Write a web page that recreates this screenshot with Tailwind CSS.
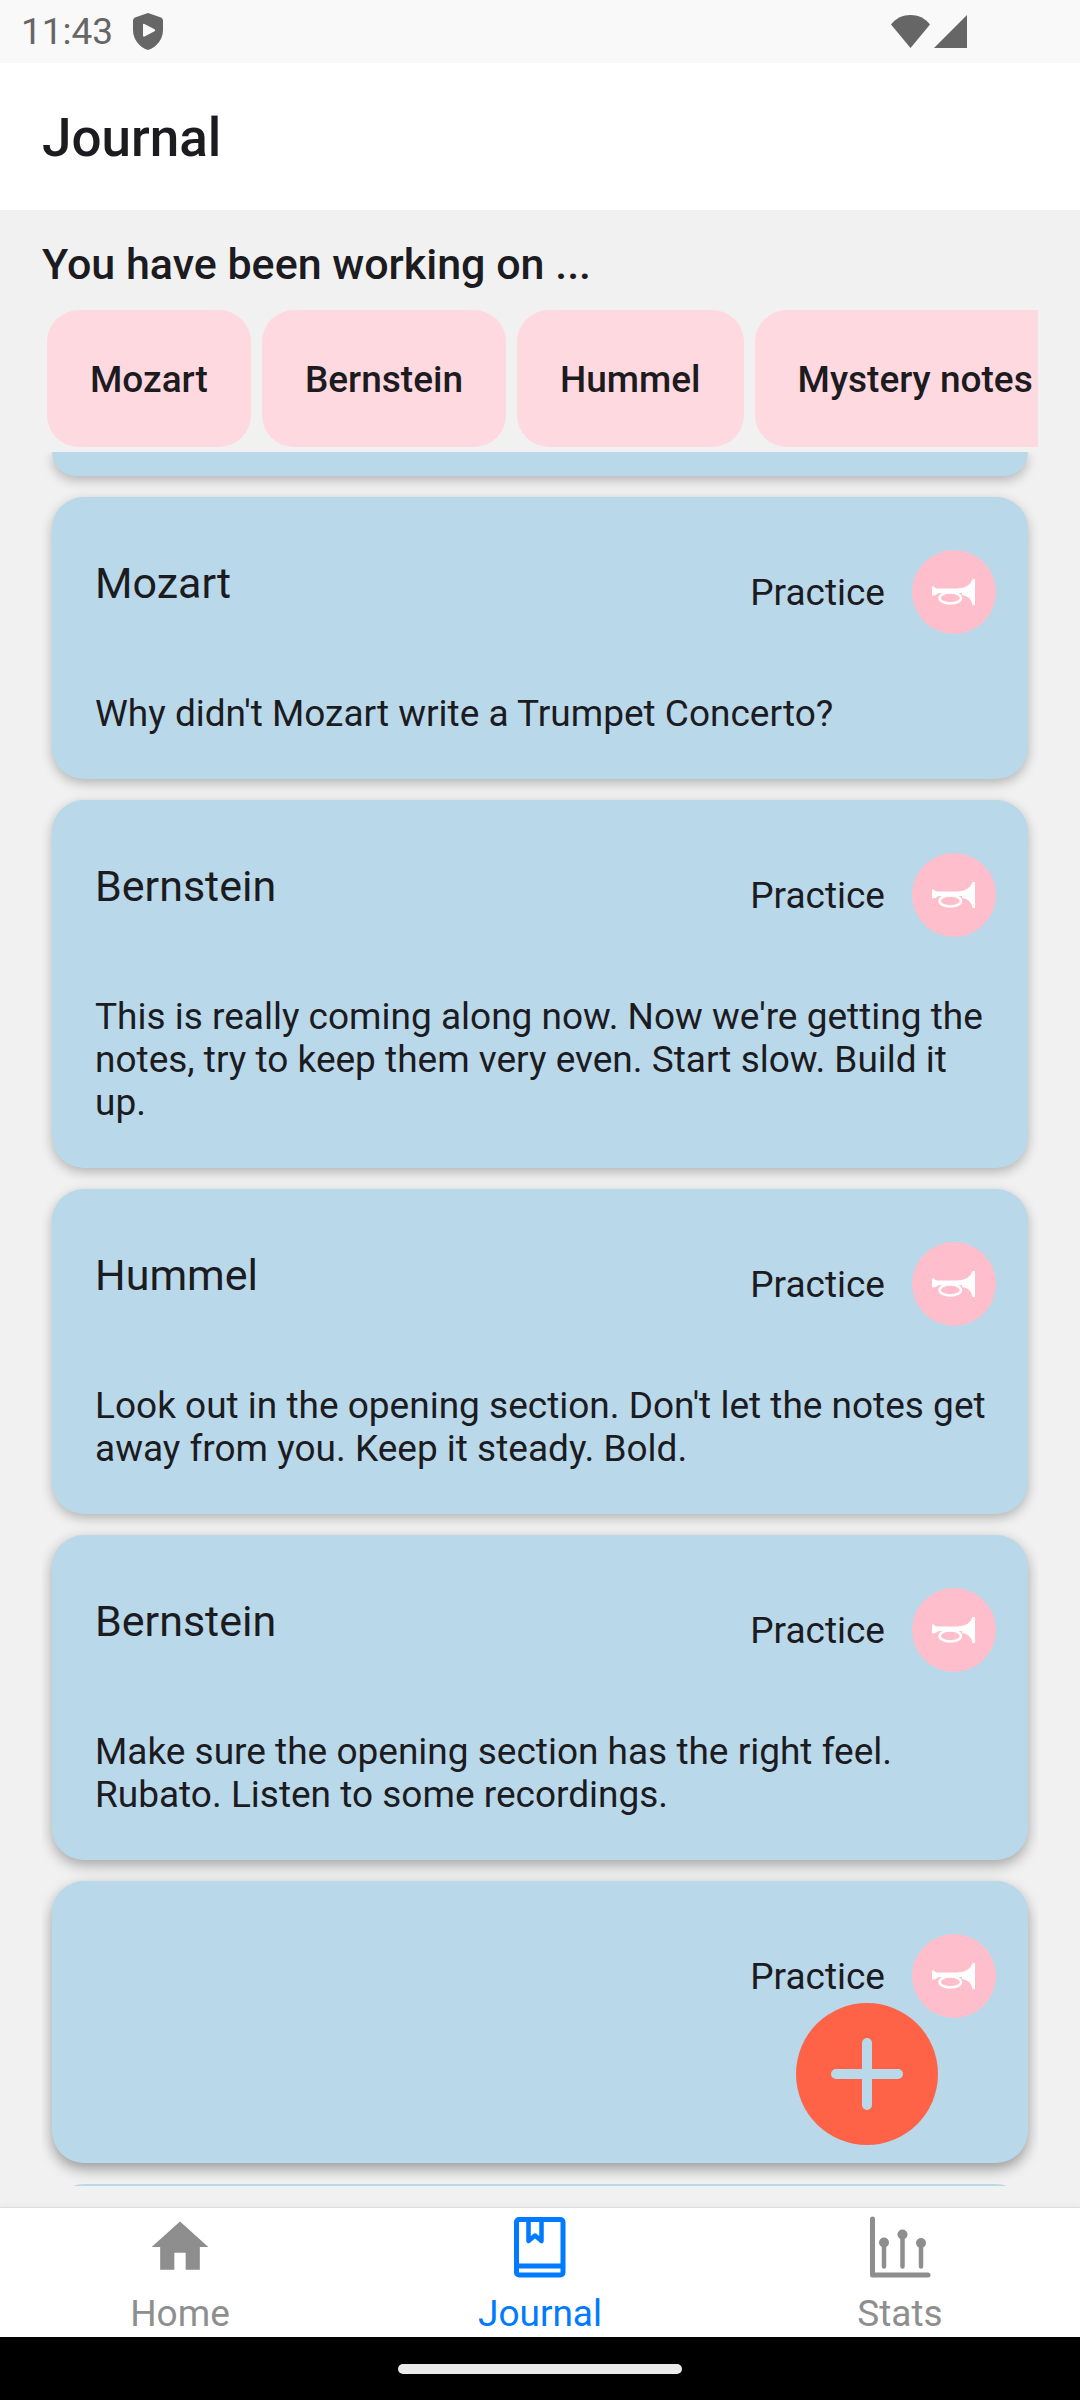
<!DOCTYPE html>
<html lang="en">
<head>
<meta charset="utf-8">
<meta name="viewport" content="width=device-width, initial-scale=1">
<title>Journal</title>
<script src="https://cdn.jsdelivr.net/npm/@tailwindcss/browser@4"></script>
</head>
<body class="font-[Roboto,sans-serif] text-[#1c1b1f]">
<svg class="hidden">
  <symbol id="trumpet" viewBox="0 0 44 28">
    <path d="M0 8.500h2Q3 10.500 5 10.500H25Q38 10 40.500 1H43V27H40.500Q39 18 30 17V15H8Q5 15 4 17L0 17.500z" fill="#fff"/>
    <ellipse cx="18.300" cy="20" rx="10.700" ry="5.500" fill="#ffbecb" stroke="#fff" stroke-width="2.500"/>
  </symbol>
</svg>
<div class="relative flex h-screen flex-col overflow-hidden bg-[#f1f1f1]">

  <!-- Status bar -->
  <div class="flex h-[63px] shrink-0 items-center justify-between bg-[#f9f9f9] pl-[21px] pr-[113px] text-[#666]">
    <div class="flex items-center gap-5">
      <span class="text-[37px] leading-[43px]">11:43</span>
      <svg class="h-[37px] w-[30px]" viewBox="0 0 30 37"><path fill="#666" fill-rule="evenodd" d="M15 0 2 4.500Q0 5.300 0 7.500V17C0 26 6 34 15 37c9-3 15-11 15-20V7.500Q30 5.300 28 4.500zM11.500 11c-1-.6-1.500-.2-1.500.8v10.800c0 1 .6 1.300 1.500.8l10-5.200c1-.6 1-1.300 0-1.900z"/></svg>
    </div>
    <div class="flex items-center gap-1">
      <svg class="h-[33px] w-[39px]" viewBox="0 0 39 33"><path fill="#666" d="M19.500 33 0 9.500C5 3 12 0 19.500 0S34 3 39 9.500z"/></svg>
      <svg class="h-[33px] w-[33px]" viewBox="0 0 33 33"><path fill="#666" d="M33 0v33H0z"/></svg>
    </div>
  </div>

  <!-- Title bar -->
  <header class="flex h-[147px] shrink-0 items-center bg-white px-[42px] pt-1">
    <h1 class="text-[53px] font-medium leading-[61px]">Journal</h1>
  </header>

  <main class="flex min-h-0 flex-1 flex-col px-[42px] pt-[30px]">
    <h2 class="text-[43px] font-medium leading-[49px]">You have been working on ...</h2>
    <div class="mt-[21px] flex shrink-0 gap-[11px] overflow-hidden pl-[5px]">
      <button class="h-[137px] shrink-0 rounded-[32px] bg-[#ffd9e0] px-[43px] pt-0.5 text-[37px] font-medium leading-[43px]">Mozart</button>
      <button class="h-[137px] shrink-0 rounded-[32px] bg-[#ffd9e0] px-[43px] pt-0.5 text-[37px] font-medium leading-[43px]">Bernstein</button>
      <button class="h-[137px] shrink-0 rounded-[32px] bg-[#ffd9e0] px-[43px] pt-0.5 text-[37px] font-medium leading-[43px]">Hummel</button>
      <button class="h-[137px] shrink-0 rounded-[32px] bg-[#ffd9e0] px-[43px] pt-0.5 text-[37px] font-medium leading-[43px]">Mystery notes</button>
    </div>

    <!-- Entries -->
    <div class="mb-[21px] mt-[5px] flex min-h-0 flex-1 flex-col gap-[21px] overflow-hidden px-2.5">
      <div class="h-6 shrink-0 rounded-b-[32px] bg-[#b9d8e9] shadow-[0_4px_12px_rgba(0,0,0,0.26)]"></div>

      <article class="shrink-0 rounded-[32px] bg-[#b9d8e9] shadow-[0_4px_12px_rgba(0,0,0,0.26)]">
        <div class="flex h-[189px] items-center pl-[43px] pr-8">
          <h3 class="flex-1 pb-4 text-[43px] leading-[49px]">Mozart</h3>
          <span class="mr-[27px] pt-0.5 text-[37px] leading-[43px]">Practice</span>
          <span class="flex size-[84px] items-center justify-center rounded-full bg-[#ffbecb]"><svg class="h-7 w-11"><use href="#trumpet"/></svg></span>
        </div>
        <p class="pb-11 pl-[43px] pr-8 pt-1.5 text-[37px] leading-[43px]">Why didn't Mozart write a Trumpet Concerto?</p>
      </article>

      <article class="shrink-0 rounded-[32px] bg-[#b9d8e9] shadow-[0_4px_12px_rgba(0,0,0,0.26)]">
        <div class="flex h-[189px] items-center pl-[43px] pr-8">
          <h3 class="flex-1 pb-4 text-[43px] leading-[49px]">Bernstein</h3>
          <span class="mr-[27px] pt-0.5 text-[37px] leading-[43px]">Practice</span>
          <span class="flex size-[84px] items-center justify-center rounded-full bg-[#ffbecb]"><svg class="h-7 w-11"><use href="#trumpet"/></svg></span>
        </div>
        <p class="pb-11 pl-[43px] pr-8 pt-1.5 text-[37px] leading-[43px]">This is really coming along now. Now we're getting the notes, try to keep them very even. Start slow. Build it up.</p>
      </article>

      <article class="shrink-0 rounded-[32px] bg-[#b9d8e9] shadow-[0_4px_12px_rgba(0,0,0,0.26)]">
        <div class="flex h-[189px] items-center pl-[43px] pr-8">
          <h3 class="flex-1 pb-4 text-[43px] leading-[49px]">Hummel</h3>
          <span class="mr-[27px] pt-0.5 text-[37px] leading-[43px]">Practice</span>
          <span class="flex size-[84px] items-center justify-center rounded-full bg-[#ffbecb]"><svg class="h-7 w-11"><use href="#trumpet"/></svg></span>
        </div>
        <p class="pb-11 pl-[43px] pr-8 pt-1.5 text-[37px] leading-[43px]">Look out in the opening section. Don't let the notes get away from you. Keep it steady. Bold.</p>
      </article>

      <article class="shrink-0 rounded-[32px] bg-[#b9d8e9] shadow-[0_5px_14px_rgba(0,0,0,0.32)]">
        <div class="flex h-[189px] items-center pl-[43px] pr-8">
          <h3 class="flex-1 pb-4 text-[43px] leading-[49px]">Bernstein</h3>
          <span class="mr-[27px] pt-0.5 text-[37px] leading-[43px]">Practice</span>
          <span class="flex size-[84px] items-center justify-center rounded-full bg-[#ffbecb]"><svg class="h-7 w-11"><use href="#trumpet"/></svg></span>
        </div>
        <p class="pb-11 pl-[43px] pr-8 pt-1.5 text-[37px] leading-[43px]">Make sure the opening section has the right feel. Rubato. Listen to some recordings.</p>
      </article>

      <article class="h-[282px] shrink-0 rounded-[32px] bg-[#b9d8e9] shadow-[0_6px_14px_rgba(0,0,0,0.36)]">
        <div class="flex h-[189px] items-center justify-end pl-[43px] pr-8">
          <span class="mr-[27px] pt-0.5 text-[37px] leading-[43px]">Practice</span>
          <span class="flex size-[84px] items-center justify-center rounded-full bg-[#ffbecb]"><svg class="h-7 w-11"><use href="#trumpet"/></svg></span>
        </div>
      </article>

      <div class="h-[282px] shrink-0 rounded-[32px] bg-[#b9d8e9]"></div>
    </div>
  </main>

  <!-- Floating add button -->
  <button aria-label="Add entry" class="absolute bottom-[255px] right-[142px] flex size-[142px] items-center justify-center rounded-full bg-[#ff6347]">
    <svg class="size-[72px]" viewBox="0 0 72 72"><path d="M36 5v62M5 36h62" stroke="#b9d8e9" stroke-width="10" stroke-linecap="round"/></svg>
  </button>

  <!-- Tab bar -->
  <nav class="grid h-[130px] shrink-0 grid-cols-3 border-t border-[#dedede] bg-white pt-[5px] text-[37px] leading-[43px] text-[#8e8e8f] shadow-[0_-2px_6px_rgba(0,0,0,0.04)]">
    <a href="#home" class="flex flex-col items-center gap-[11px]">
      <svg class="size-[68px]" viewBox="0 0 24 24"><path fill="currentColor" d="M10 20v-6h4v6h5v-8h3L12 3 2 12h3v8z"/></svg>
      Home
    </a>
    <a href="#journal" class="flex flex-col items-center gap-[11px] text-[#007aff]">
      <svg class="size-[68px]" viewBox="0 0 68 68" fill="none" stroke="currentColor">
        <rect x="10.500" y="6.500" width="46.500" height="55.500" rx="2.500" stroke-width="5"/>
        <path d="M9 53H58" stroke-width="5"/>
        <path d="M22.500 6V28L29 22.500l6.500 5.500V6" stroke-width="4.500" stroke-linejoin="round"/>
      </svg>
      Journal
    </a>
    <a href="#stats" class="flex flex-col items-center gap-[11px]">
      <svg class="size-[68px]" viewBox="0 0 68 68" fill="none" stroke="currentColor" stroke-linecap="round">
        <path d="M6.500 6V62H62" stroke-width="5" stroke-linejoin="round"/>
        <path d="M18 30V53.500M36.500 22V53.500M55 31V53.500" stroke-width="4.500"/>
        <g fill="currentColor" stroke="none"><circle cx="18" cy="29.500" r="5"/><circle cx="36.500" cy="21.500" r="5"/><circle cx="55" cy="30" r="5"/></g>
      </svg>
      Stats
    </a>
  </nav>

  <!-- System gesture bar -->
  <div class="flex h-[63px] shrink-0 items-center justify-center bg-black">
    <div class="h-2.5 w-[284px] rounded-full bg-[#ebebeb]"></div>
  </div>
</div>
</body>
</html>
